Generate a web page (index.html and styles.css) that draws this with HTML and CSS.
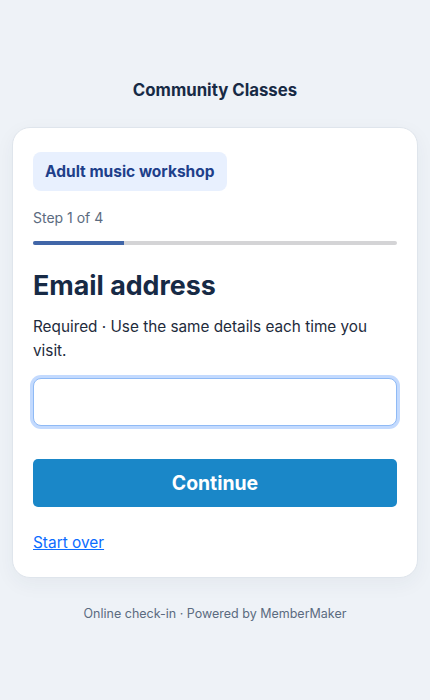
FILE: index.html
```html
<!DOCTYPE html>
<html lang="en">
<head>
<meta charset="utf-8">
<title>Community Classes</title>
<link rel="stylesheet" href="styles.css">
</head>
<body>
<div class="page">
  <h1 class="site-title">Community Classes</h1>
  <main class="card">
    <div class="badge">Adult music workshop</div>
    <div class="step">Step 1 of 4</div>
    <div class="progress"><div class="progress-fill" style="width:25%"></div></div>
    <h2 class="question">Email address</h2>
    <p class="hint">Required · Use the same details each time you visit.</p>
    <input class="field" type="email" aria-label="Email address">
    <button class="btn" type="button">Continue</button>
    <a class="link" href="#">Start over</a>
  </main>
  <p class="footer">Online check-in · Powered by MemberMaker</p>
</div>
</body>
</html>
```
FILE: styles.css
```css
* { box-sizing: border-box; }
html, body { margin: 0; padding: 0; }
body {
  background: #eef2f7;
  font-family: Inter, "Noto Sans", "Liberation Sans", sans-serif;
  color: #172a45;
}
.page {
  padding: 78px 12px 40px;
}
.site-title {
  margin: 0;
  text-align: center;
  font-size: 16.8px;
  line-height: 24px;
  font-weight: 700;
  color: #172a45;
}
.card {
  margin-top: 25px;
  background: #fff;
  border: 1px solid #dfe5ec;
  border-radius: 18px;
  padding: 24px 20px 22px;
  display: flex;
  flex-direction: column;
  align-items: stretch;
  box-shadow: 0 6px 20px rgba(30, 50, 80, 0.05);
}
.badge {
  align-self: flex-start;
  background: #e8f0fe;
  color: #1e3f8a;
  font-size: 15.5px;
  line-height: 19px;
  font-weight: 700;
  padding: 10px 12px;
  border-radius: 8px;
}
.step {
  margin-top: 17px;
  font-size: 14px;
  line-height: 20px;
  color: #5b6b80;
}
.progress {
  margin-top: 13px;
  height: 4px;
  background: #d4d4d6;
  border-radius: 2px;
  overflow: hidden;
}
.progress-fill {
  height: 100%;
  background: #4166a8;
}
.question {
  margin: 24px 0 0;
  font-size: 26.8px;
  line-height: 32px;
  font-weight: 700;
  color: #172a45;
}
.hint {
  margin: 14px 0 0;
  font-size: 15.3px;
  line-height: 24px;
  color: #1e2b3c;
}
.field {
  margin-top: 15px;
  height: 48px;
  width: 100%;
  border: 1px solid #8fbaf5;
  border-radius: 8px;
  box-shadow: 0 0 0 3px #c3dafe;
  outline: none;
  font: inherit;
  font-size: 16px;
  padding: 0 12px;
  background: #fff;
}
.btn {
  margin-top: 33px;
  height: 48px;
  width: 100%;
  border: 0;
  border-radius: 5px;
  background: #1a87c8;
  color: #fff;
  font-family: inherit;
  font-size: 19.4px;
  font-weight: 700;
  cursor: pointer;
}
.link {
  align-self: flex-start;
  margin-top: 24px;
  font-size: 15.4px;
  line-height: 24px;
  color: #0b6cff;
  text-decoration: underline;
}
.footer {
  margin: 26px 0 0;
  text-align: center;
  font-size: 12.5px;
  line-height: 20px;
  color: #5b6b80;
}
```
